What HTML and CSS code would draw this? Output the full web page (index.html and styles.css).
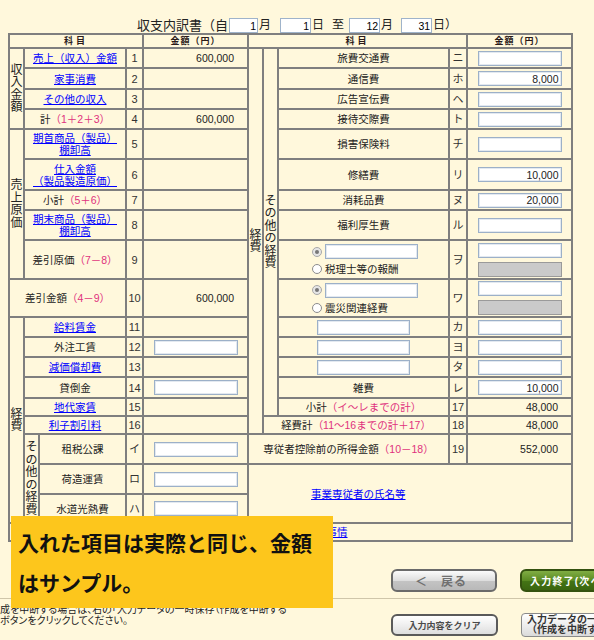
FILE: index.html
```html
<!DOCTYPE html>
<html lang="ja">
<head>
<meta charset="utf-8">
<title>収支内訳書</title>
<link rel="stylesheet" href="styles.css">
</head>
<body>
<div class="title">
  <span class="t-main">収支内訳書（自</span>
  <input class="tin w29" value="1"><span class="tl">月</span>
  <input class="tin w31 ml9" value="1"><span class="tl">日</span>
  <span class="tl ml8">至</span>
  <input class="tin w31 ml5" value="12"><span class="tl">月</span>
  <input class="tin w31 ml8" value="31"><span class="tl">日）</span>
</div>

<table class="sheet">
  <colgroup>
    <col class="c1"><col class="c2"><col class="c3"><col class="c4"><col class="c5">
    <col class="c6"><col class="c7"><col class="c8"><col class="c9"><col class="c10">
  </colgroup>
  <tr class="h14">
    <th colspan="4" class="kamoku">科目</th>
    <th class="kin">金額（円）</th>
    <th colspan="4" class="kamoku">科目</th>
    <th class="kin">金額（円）</th>
  </tr>
  <tr class="h20">
    <td rowspan="4" class="v"><div>収入金額</div></td>
    <td colspan="2" class="nm"><a href="#">売上（収入）金額</a></td>
    <td class="no">1</td>
    <td class="amt">600,000</td>
    <td rowspan="16" class="v"><div>経費</div></td>
    <td rowspan="15" class="v"><div>その他の経費</div></td>
    <td class="nm">旅費交通費</td>
    <td class="no">ニ</td>
    <td class="in"><input class="box"></td>
  </tr>
  <tr class="h21">
    <td colspan="2" class="nm"><a href="#">家事消費</a></td>
    <td class="no">2</td>
    <td class="amt"></td>
    <td class="nm">通信費</td>
    <td class="no">ホ</td>
    <td class="in"><input class="box" value="8,000"></td>
  </tr>
  <tr class="h20">
    <td colspan="2" class="nm"><a href="#">その他の収入</a></td>
    <td class="no">3</td>
    <td class="amt"></td>
    <td class="nm">広告宣伝費</td>
    <td class="no">ヘ</td>
    <td class="in"><input class="box"></td>
  </tr>
  <tr class="h20">
    <td colspan="2" class="nm">計<span class="f">（1＋2＋3）</span></td>
    <td class="no">4</td>
    <td class="amt">600,000</td>
    <td class="nm">接待交際費</td>
    <td class="no">ト</td>
    <td class="in"><input class="box"></td>
  </tr>
  <tr class="h30">
    <td rowspan="5" class="v"><div>売上原価</div></td>
    <td colspan="2" class="nm"><a href="#">期首商品（製品）<br>棚卸高</a></td>
    <td class="no">5</td>
    <td class="amt"></td>
    <td class="nm">損害保険料</td>
    <td class="no">チ</td>
    <td class="in"><input class="box"></td>
  </tr>
  <tr class="h31">
    <td colspan="2" class="nm"><a href="#">仕入金額<br>（製品製造原価）</a></td>
    <td class="no">6</td>
    <td class="amt"></td>
    <td class="nm">修繕費</td>
    <td class="no">リ</td>
    <td class="in"><input class="box" value="10,000"></td>
  </tr>
  <tr class="h20">
    <td colspan="2" class="nm">小計<span class="f">（5＋6）</span></td>
    <td class="no">7</td>
    <td class="amt"></td>
    <td class="nm">消耗品費</td>
    <td class="no">ヌ</td>
    <td class="in"><input class="box" value="20,000"></td>
  </tr>
  <tr class="h30">
    <td colspan="2" class="nm"><a href="#">期末商品（製品）<br>棚卸高</a></td>
    <td class="no">8</td>
    <td class="amt"></td>
    <td class="nm">福利厚生費</td>
    <td class="no">ル</td>
    <td class="in"><input class="box"></td>
  </tr>
  <tr class="h39">
    <td colspan="2" class="nm">差引原価<span class="f">（7－8）</span></td>
    <td class="no">9</td>
    <td class="amt"></td>
    <td class="nm opt">
      <div class="optline"><span class="radio on"></span><input class="box wide"></div>
      <div class="optline"><span class="radio"></span><span>税理士等の報酬</span></div>
    </td>
    <td class="no">ヲ</td>
    <td class="in"><div class="pair"><input class="box"><input class="box off" disabled></div></td>
  </tr>
  <tr class="h38">
    <td colspan="3" class="nm">差引金額<span class="f">（4－9）</span></td>
    <td class="no">10</td>
    <td class="amt">600,000</td>
    <td class="nm opt">
      <div class="optline"><span class="radio on"></span><input class="box wide"></div>
      <div class="optline"><span class="radio"></span><span>震災関連経費</span></div>
    </td>
    <td class="no">ワ</td>
    <td class="in"><div class="pair"><input class="box"><input class="box off" disabled></div></td>
  </tr>
  <tr class="h20">
    <td rowspan="9" class="v"><div>経費</div></td>
    <td colspan="2" class="nm"><a href="#">給料賃金</a></td>
    <td class="no">11</td>
    <td class="amt"></td>
    <td class="nm"><input class="box name"></td>
    <td class="no">カ</td>
    <td class="in"><input class="box"></td>
  </tr>
  <tr class="h20">
    <td colspan="2" class="nm">外注工賃</td>
    <td class="no">12</td>
    <td class="in"><input class="box"></td>
    <td class="nm"><input class="box name"></td>
    <td class="no">ヨ</td>
    <td class="in"><input class="box"></td>
  </tr>
  <tr class="h20">
    <td colspan="2" class="nm"><a href="#">減価償却費</a></td>
    <td class="no">13</td>
    <td class="amt"></td>
    <td class="nm"><input class="box name"></td>
    <td class="no">タ</td>
    <td class="in"><input class="box"></td>
  </tr>
  <tr class="h21">
    <td colspan="2" class="nm">貸倒金</td>
    <td class="no">14</td>
    <td class="in"><input class="box"></td>
    <td class="nm">雑費</td>
    <td class="no">レ</td>
    <td class="in"><input class="box" value="10,000"></td>
  </tr>
  <tr class="h18">
    <td colspan="2" class="nm"><a href="#">地代家賃</a></td>
    <td class="no">15</td>
    <td class="amt"></td>
    <td class="nm">小計<span class="f">（イ～レまでの計）</span></td>
    <td class="no">17</td>
    <td class="amt">48,000</td>
  </tr>
  <tr class="h18">
    <td colspan="2" class="nm"><a href="#">利子割引料</a></td>
    <td class="no">16</td>
    <td class="amt"></td>
    <td colspan="2" class="nm">経費計<span class="f">（11～16までの計＋17）</span></td>
    <td class="no">18</td>
    <td class="amt">48,000</td>
  </tr>
  <tr class="h30">
    <td rowspan="3" class="v"><div>その他の経費</div></td>
    <td class="nm">租税公課</td>
    <td class="no">イ</td>
    <td class="in"><input class="box"></td>
    <td colspan="3" class="nm">専従者控除前の所得金額<span class="f">（10－18）</span></td>
    <td class="no">19</td>
    <td class="amt">552,000</td>
  </tr>
  <tr class="h30">
    <td class="nm">荷造運賃</td>
    <td class="no">ロ</td>
    <td class="in"><input class="box"></td>
    <td colspan="5" rowspan="2" class="emp"><a href="#">事業専従者の氏名等</a></td>
  </tr>
  <tr class="h29">
    <td class="nm">水道光熱費</td>
    <td class="no">ハ</td>
    <td class="in"><input class="box"></td>
  </tr>
  <tr class="h18">
    <td colspan="10" class="last"><a href="#">本年中における特殊事情</a></td>
  </tr>
</table>

<div class="nav">
  <button class="btn back">＜　戻る</button>
  <button class="btn next">入力終了(次へ)　＞</button>
</div>
<div class="rule"></div>
<div class="tools">
  <p class="note">作成を中断する場合は、右の「入力データの一時保存（作成を中断する<br>）」ボタンをクリックしてください。</p>
  <button class="btn clear">入力内容をクリア</button>
  <button class="btn save">入力データの一時保存<br>（作成を中断する）</button>
</div>

<div class="notice">入れた項目は実際と同じ、金額<br>はサンプル。</div>
</body>
</html>
```

FILE: styles.css
```css
* { box-sizing: border-box; }
html, body {
  margin: 0;
  padding: 0;
  background: #fff8dc;
  overflow: hidden;
}
body {
  width: 594px;
  height: 640px;
  position: relative;
  font-family: "Liberation Sans", "Noto Sans CJK JP", sans-serif;
  font-size: 10.5px;
  color: #222;
}

/* title */
.title {
  display: flex;
  align-items: center;
  height: 15px;
  margin-top: 18px;
  padding-left: 137px;
  font-size: 12px;
  line-height: 15px;
  white-space: nowrap;
}
.t-main { font-size: 13px; margin-right: 1px; }
.tin {
  height: 15px;
  border: 1px solid #9fb3ca;
  background: #fff;
  font: 10.5px "Liberation Sans", sans-serif;
  text-align: right;
  padding: 0 1px;
  margin: 0;
}
.tl { margin-left: 1px; }
.w29 { width: 29px; }
.w31 { width: 31px; }
.ml5 { margin-left: 5px; }
.ml8 { margin-left: 8px; }
.ml9 { margin-left: 9px; }

/* sheet */
.sheet {
  margin-left: 8px;
  width: 563px;
  table-layout: fixed;
  border-collapse: collapse;
}
.c1, .c2, .c6, .c7 { width: 15px; }
.c3 { width: 87px; }
.c4 { width: 17px; }
.c5, .c10 { width: 105px; }
.c8 { width: 171px; }
.c9 { width: 18px; }

.sheet th, .sheet td {
  border: 2px solid #7f7f7f;
  padding: 0;
  text-align: center;
  vertical-align: middle;
  line-height: 12px;
  font-weight: normal;
}
.h14 { height: 14px; }
.h18 { height: 18px; }
.h20 { height: 20px; }
.h21 { height: 21px; }
.h29 { height: 29px; }
.h30 { height: 30px; }
.h31 { height: 31px; }
.h38 { height: 38px; }
.h39 { height: 39px; }

.sheet th {
  font-size: 9px;
  font-weight: bold;
  color: #2a1a1a;
}
.kamoku { letter-spacing: 3px; }
.kin { letter-spacing: 1px; }

.v div {
  width: 12px;
  margin: 0 auto;
  font-size: 12px;
  line-height: 12.5px;
  word-break: break-all;
}
.nm { line-height: 13px; }
.no { font-size: 11px; color: #333; }
.amt {
  text-align: right !important;
  padding-right: 13px !important;
  font-size: 10.5px;
}
.f { color: #e0317c; }
a { color: #0000ff; text-decoration: underline; }

.box {
  display: block;
  width: 84px;
  height: 15px;
  margin: 0 auto;
  border: 1px solid #9cb0c8;
  box-shadow: inset 0 0 0 1px #e3e9f0;
  background: #fff;
  font: 10.5px "Liberation Sans", sans-serif;
  color: #222;
  text-align: right;
  padding: 0 2px;
}
.box.name { width: 93px; }
.box.wide { width: 93px; margin: 0; }
.box.off { background: #cacaca; border-color: #9a9a9a; box-shadow: none; }
.pair { display: flex; flex-direction: column; align-items: center; gap: 4px; }

.opt { text-align: left !important; padding-left: 33px !important; }
.optline { display: flex; align-items: center; gap: 3px; }
.optline + .optline { margin-top: 4px; }
.radio {
  width: 10px;
  height: 10px;
  border-radius: 50%;
  border: 1px solid #8c8c8c;
  background: #fff;
  position: relative;
  flex-shrink: 0;
}
.radio.on { background: #e6e6e6; border-color: #a8a8a8; }
.radio.on::after {
  content: "";
  position: absolute;
  left: 2px;
  top: 2px;
  width: 4px;
  height: 4px;
  border-radius: 50%;
  background: #777;
}

.emp { text-align: left !important; padding-left: 62px !important; }
.last { text-align: left !important; padding-left: 222px !important; }

/* navigation */
.nav {
  display: flex;
  gap: 23px;
  margin: 27px 0 0 391px;
  height: 23px;
}
.btn {
  flex-shrink: 0;
  margin: 0;
  padding: 0;
  font-family: "Liberation Sans", "Noto Sans CJK JP", sans-serif;
  font-weight: bold;
  cursor: pointer;
  white-space: nowrap;
}
.back {
  width: 106px;
  height: 23px;
  border: 2px solid #6a6a6a;
  border-radius: 6px;
  background: linear-gradient(#fbfbfb, #dedede 50%, #c4c4c4 51%, #b9b9b9);
  color: #707070;
  font-size: 12px;
  letter-spacing: 1px;
  padding-right: 6px;
}
.next {
  width: 130px;
  height: 23px;
  border: 2px solid #34520f;
  border-radius: 6px;
  background: linear-gradient(#80ad44, #5a8a22 50%, #447515 51%, #3a6510);
  color: #fff;
  font-size: 10px;
  letter-spacing: 1.2px;
  text-align: left;
  padding-left: 8px;
}
.rule {
  height: 1px;
  margin-top: 6px;
  background: #cfc6aa;
}
.tools {
  display: flex;
  align-items: flex-start;
}
.note {
  flex-shrink: 0;
  width: 401px;
  margin: 4px 0 0 -10px;
  font-family: "Noto Sans CJK JP", sans-serif;
  font-feature-settings: "palt";
  font-size: 10px;
  line-height: 11px;
  color: #222;
}
.clear {
  width: 107px;
  height: 22px;
  margin-top: 15px;
  border: 2px solid #5a5a5a;
  border-radius: 6px;
  background: linear-gradient(#ffffff, #efefef 50%, #dedede);
  color: #4a4a4a;
  font-size: 9px;
}
.save {
  width: 120px;
  height: 24px;
  margin-top: 14px;
  margin-left: 23px;
  border: 1px solid #8a8a8a;
  border-radius: 4px;
  background: linear-gradient(#ffffff, #eeeeee 50%, #dadada);
  color: #333;
  font-size: 10px;
  line-height: 10px;
  text-align: left;
  padding-left: 5px;
}

/* overlay notice */
.notice {
  position: absolute;
  left: 11px;
  top: 516px;
  width: 322px;
  height: 92px;
  background: #fdc61c;
  padding: 6px 0 0 7px;
  font-family: "Noto Sans CJK JP", sans-serif;
  font-weight: bold;
  font-size: 21px;
  line-height: 40px;
  color: #111;
  white-space: nowrap;
}
```
